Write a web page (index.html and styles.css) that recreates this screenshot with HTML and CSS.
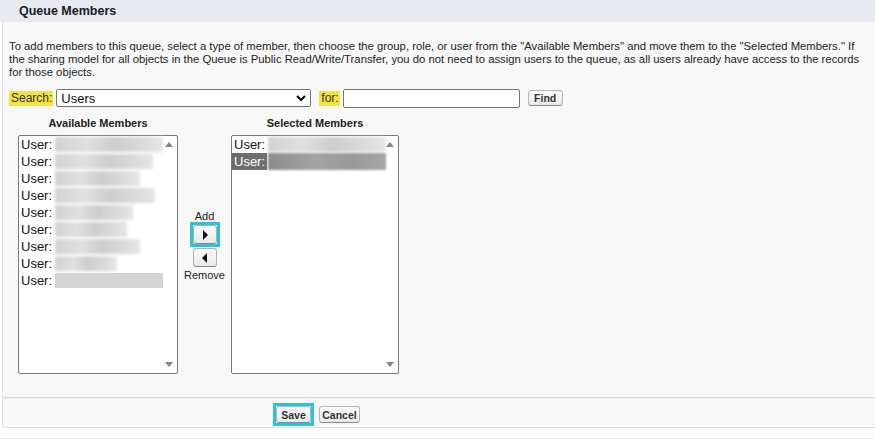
FILE: index.html
```html
<!DOCTYPE html>
<html lang="en">
  <head>
    <meta charset="UTF-8" />
    <title>Queue Members</title>
    <link rel="stylesheet" href="styles.css">
  </head>
  <body>
    <div class="block">
      <div class="block-head">
        <h2>Queue Members</h2>
      </div>
      <div class="block-body">
        <p class="intro">To add members to this queue, select a type of member, then choose the group, role, or user from the "Available Members" and move them to the "Selected Members." If the sharing model for all objects in the Queue is Public Read/Write/Transfer, you do not need to assign users to the queue, as all users already have access to the records for those objects.</p>

        <div class="search-row">
          <label class="hl">Search:</label>
          <div class="select">
            <span>Users</span>
            <svg width="10" height="7" viewBox="0 0 10 7"><polyline points="1,1 5,5 9,1" fill="none" stroke="#111" stroke-width="2.2"/></svg>
          </div>
          <label class="hl">for:</label>
          <input class="text-input" type="text">
          <button class="btn btn-find">Find</button>
        </div>

        <div class="duel">
          <div class="col col-left">
            <div class="col-title">Available Members</div>
            <div class="listbox">
              <div class="opt">User: <span class="smear" style="width:108px"></span></div>
              <div class="opt">User: <span class="smear" style="width:98px"></span></div>
              <div class="opt">User: <span class="smear" style="width:85px"></span></div>
              <div class="opt">User: <span class="smear" style="width:100px"></span></div>
              <div class="opt">User: <span class="smear" style="width:78px"></span></div>
              <div class="opt">User: <span class="smear" style="width:72px"></span></div>
              <div class="opt">User: <span class="smear" style="width:85px"></span></div>
              <div class="opt">User: <span class="smear" style="width:62px"></span></div>
              <div class="opt">User: <span class="smear smear-solid" style="width:108px"></span></div>
              <span class="arrow arrow-up"></span>
              <span class="arrow arrow-down"></span>
            </div>
          </div>

          <div class="mover">
            <span class="mover-label">Add</span>
            <span class="focus"><button class="arrow-btn"><span class="tri tri-right"></span></button></span>
            <button class="arrow-btn"><span class="tri tri-left"></span></button>
            <span class="mover-label mover-label-bottom">Remove</span>
          </div>

          <div class="col col-right">
            <div class="col-title">Selected Members</div>
            <div class="listbox">
              <div class="opt">User: <span class="smear" style="width:118px"></span></div>
              <div class="opt opt-selected">User: <span class="smear smear-dark" style="width:118px"></span></div>
              <span class="arrow arrow-up"></span>
              <span class="arrow arrow-down"></span>
            </div>
          </div>
        </div>
      </div>
      <div class="block-foot">
        <span class="focus"><button class="btn">Save</button></span>
        <button class="btn btn-cancel">Cancel</button>
      </div>
    </div>
    <div class="rule"></div>
  </body>
</html>
```

FILE: styles.css
```css
* {
  box-sizing: border-box;
}
body {
  margin: 0;
  background: #fff;
  font-family: "Liberation Sans", Arial, sans-serif;
  color: #222;
}

.block-head {
  height: 22px;
  background: #e8eaf2;
  padding-left: 19px;
  display: flex;
  align-items: center;
}
.block-head h2 {
  margin: 0;
  font-size: 12.5px;
  font-weight: bold;
  color: #1a1a1a;
}

.block-body,
.block-foot {
  margin-left: 2px;
  border-left: 1px solid #e2e2e2;
  background: #f8f8f8;
}
.block-body {
  padding: 18px 4px 23px 6px;
  border-bottom: 1px solid #dadada;
}
.intro {
  margin: 0;
  font-size: 11.3px;
  line-height: 13px;
  color: #222;
}

.search-row {
  margin-top: 10px;
  height: 18px;
  display: flex;
  align-items: center;
}
.hl {
  background: #f4e242;
  font-size: 12px;
  line-height: 15px;
  padding: 0 1px 0 2px;
  color: #333;
}
.select {
  width: 255px;
  height: 18px;
  margin-left: 3px;
  margin-right: 8px;
  border: 1px solid #767676;
  border-radius: 2px;
  background: #fff;
  display: flex;
  align-items: center;
  justify-content: space-between;
  padding: 0 4px 0 4px;
  font-size: 13px;
  color: #111;
}
.text-input {
  width: 177px;
  height: 19px;
  margin: 0 8px 0 3px;
  border: 1px solid #767676;
  border-radius: 2px;
  background: #fff;
  padding: 0;
}

.btn {
  font-family: "Liberation Sans", Arial, sans-serif;
  font-size: 10.5px;
  font-weight: bold;
  color: #333;
  height: 17px;
  line-height: 14px;
  padding: 0 4px;
  border: 1px solid #b5b5b5;
  border-bottom-color: #8a8a8a;
  border-radius: 3px;
  background: linear-gradient(#fbfbfb, #e9e9e9);
}
.btn-find {
  width: 35px;
  height: 16px;
}
.btn-cancel {
  width: 41px;
  padding: 0 2px;
}

.duel {
  margin-left: 9px;
  margin-top: 10px;
  display: flex;
}
.col-title {
  font-size: 11px;
  font-weight: bold;
  line-height: 13px;
  text-align: center;
  color: #222;
  margin-bottom: 5px;
}
.col-left {
  width: 160px;
}
.col-right {
  width: 168px;
}
.listbox {
  position: relative;
  height: 239px;
  border: 1px solid #7a7a7a;
  border-radius: 2px;
  background: #fff;
}
.opt {
  height: 17px;
  display: flex;
  align-items: center;
  font-size: 13px;
  color: #111;
  padding-left: 2px;
  white-space: pre;
}
.opt-selected {
  background: linear-gradient(90deg, #6e6e6e 0, #6e6e6e 35px, transparent 35px);
  color: #fff;
}
.smear {
  display: inline-block;
  height: 15px;
  margin-left: -1px;
  background: linear-gradient(90deg, #d2d2d2, #e0e0e0 30%, #cdcdcd 55%, #dadada 80%, #e6e6e6);
  filter: blur(1.5px);
}
.smear-solid {
  background: #d4d4d4;
  filter: blur(0.6px);
}
.smear-dark {
  height: 17px;
  background: linear-gradient(90deg, #8c8c8c, #a3a3a3 40%, #999 70%, #a6a6a6);
  filter: blur(0.8px);
}

/* scroll arrows drawn over the list corner */
.arrow {
  position: absolute;
  right: 4px;
  width: 0;
  height: 0;
  border-left: 4px solid transparent;
  border-right: 4px solid transparent;
}
.arrow-up {
  top: 6px;
  border-bottom: 5px solid #858585;
}
.arrow-down {
  bottom: 6px;
  border-top: 5px solid #858585;
}

.mover {
  width: 53px;
  padding-top: 94px;
  display: flex;
  flex-direction: column;
  align-items: center;
}
.mover-label {
  font-size: 11px;
  line-height: 11px;
  color: #222;
}
.mover-label-bottom {
  margin-top: 3px;
}
.focus {
  display: inline-flex;
  border: 3px solid #29c4d8;
}
.arrow-btn {
  width: 24px;
  height: 19px;
  padding: 0;
  border: 1px solid #b0b0b0;
  border-bottom-color: #8a8a8a;
  border-radius: 3px;
  background: linear-gradient(#fbfbfb, #e9e9e9);
  display: flex;
  align-items: center;
  justify-content: center;
}
.mover > .arrow-btn {
  margin-top: 1px;
}
.tri {
  width: 0;
  height: 0;
  border-top: 5px solid transparent;
  border-bottom: 5px solid transparent;
}
.tri-right {
  border-left: 5px solid #111;
  margin-left: 1px;
}
.tri-left {
  border-right: 5px solid #111;
  margin-right: 1px;
}

.block-foot {
  height: 30px;
  padding: 4px 0 0 270px;
  display: flex;
  align-items: flex-start;
  gap: 5px;
  border-bottom: 1px solid #dedede;
  border-bottom-left-radius: 3px;
  border-top: 1px solid #ececec;
}
.block-foot .focus .btn {
  width: 35px;
}
.block-foot .btn-cancel {
  margin-top: 3px;
}

.rule {
  margin-top: 10px;
  border-top: 1px solid #eeeeee;
}
```
